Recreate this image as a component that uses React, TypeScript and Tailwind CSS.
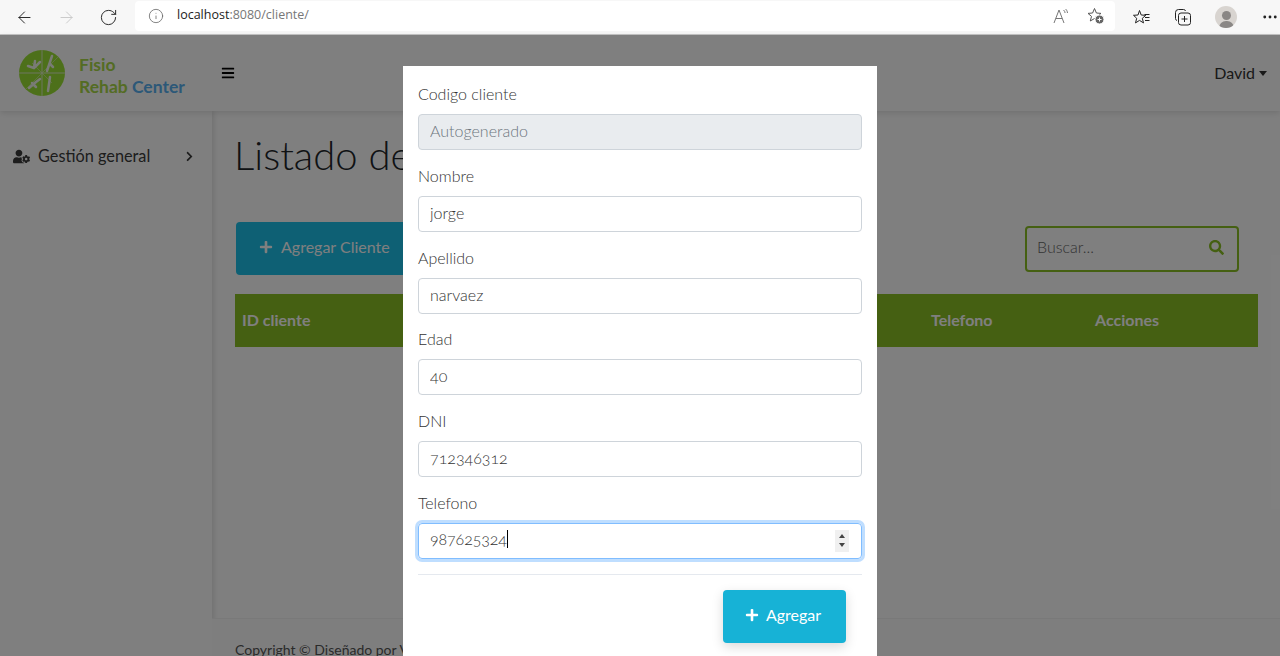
import React from 'react';
import { ArrowLeft, ArrowRight, RotateCw, Info, MoreHorizontal } from 'lucide-react';
import { FaBars, FaChevronRight, FaPlus, FaSearch, FaUserCog } from 'react-icons/fa';

const fields = [
  { label: 'Codigo cliente', value: 'Autogenerado', disabled: true },
  { label: 'Nombre', value: 'jorge' },
  { label: 'Apellido', value: 'narvaez' },
  { label: 'Edad', value: '40' },
  { label: 'DNI', value: '712346312' },
];

const BrowserBar = () => (
  <div className="h-[35px] shrink-0 bg-[#f7f7f7] border-b border-[#c4c4c4] flex items-center font-['Open_Sans',sans-serif]">
    <div className="w-[135px] flex items-center pl-[15px] gap-[23px] text-[#222]">
      <ArrowLeft size={19} strokeWidth={1.2} />
      <ArrowRight size={19} strokeWidth={1.2} className="text-[#c8c8c8]" />
      <RotateCw size={19} strokeWidth={1.2} />
    </div>
    <div className="w-[980px] h-[30px] mb-[3px] bg-white rounded-[4px] flex items-center pl-[13px] pr-[11px]">
      <Info size={16} strokeWidth={1.2} className="text-[#666]" />
      <span className="ml-[13px] text-[12.5px] text-[#777]">
        <span className="text-[#222]">localhost</span>:8080/cliente/
      </span>
      <div className="ml-auto flex items-center gap-[18px]">
        <svg width="16" height="16" viewBox="0 0 16 16" fill="none" stroke="#777" strokeWidth="1">
          <path d="M1 15 6 2l5 13M2.800 10.500h6.400" />
          <path d="M10.500 2c1 .8 1.400 1.600 1.600 3M12.500 1c1.200 1 1.800 2.200 2 4" />
        </svg>
        <svg width="17" height="17" viewBox="0 0 17 17" fill="none" stroke="#555" strokeWidth="1">
          <path d="M7.500 1.500 9.400 6l4.600.4-3.500 3 1.200 4.600-4.200-2.500-4.200 2.500 1.200-4.600L1 6.400 5.600 6z" />
          <circle cx="12.500" cy="12.500" r="4.500" fill="#666" stroke="#fff" />
          <path d="M12.500 10.500v4M10.500 12.500h4" stroke="#fff" />
        </svg>
      </div>
    </div>
    <div className="flex-1 flex items-center pl-[18px] text-[#222]">
      <svg width="18" height="17" viewBox="0 0 18 17" fill="none" stroke="#222" strokeWidth="1">
        <path d="M6.500 1.500 8.200 6l4.600.3-3.500 3 1.200 4.600-4-2.500-4 2.500 1.200-4.600L.5 6.300 5 6z" />
        <path d="M11.500 5.500h5M12 8.500h4.500M12 11.500h4.500" />
      </svg>
      <svg className="ml-[23px]" width="18" height="18" viewBox="0 0 18 18" fill="none" stroke="#222" strokeWidth="1">
        <path d="M3 12.500A2 2 0 0 1 1.500 10.500V4.500a3 3 0 0 1 3-3h5a2 2 0 0 1 2 1.500" />
        <rect x="4.500" y="5" width="12" height="12" rx="2.500" />
        <path d="M10.500 8v6M7.500 11h6" />
      </svg>
      <div className="ml-[23px] w-[22px] h-[22px] rounded-full bg-[#d8d4d0] flex flex-col items-center justify-end overflow-hidden">
        <div className="w-[9px] h-[9px] rounded-full bg-[#8a8785]" />
        <div className="w-[15px] h-[7px] mt-[1px] rounded-t-full bg-[#8a8785]" />
      </div>
      <MoreHorizontal size={18} strokeWidth={1.8} className="ml-[24px]" />
    </div>
  </div>
);

const Logo = () => (
  <svg width="46" height="46" viewBox="0 0 46 46" className="shrink-0">
    <circle cx="23" cy="23" r="23" fill="#9ae034" />
    <g stroke="#dcecc0" strokeWidth="1" fill="none">
      <path d="M23 0v46M0 23h46" />
      <path d="M23 23 39 7M23 23 7 39M23 23l10 10M23 23 13 13" opacity="0.6" />
    </g>
    <g stroke="#f2f6ea" strokeWidth="2.500" strokeLinecap="round" fill="none">
      <path d="M9 16l6 2 6-6M15 18l1-7" />
      <path d="M28 21l5-15M31 14l3 3" />
      <path d="M10 38l7-6 4-3M13 33l4 4" />
      <path d="M29 41l2-14" />
    </g>
  </svg>
);

const Page = () => (
  <div className="absolute inset-0 bg-white flex flex-col text-[#212529] font-['Lato',sans-serif]">
    <header className="relative z-10 h-[76px] shrink-0 bg-white shadow-[0_2px_6px_rgba(0,0,0,0.12)] flex items-center pl-[19px] pr-[13px]">
      <Logo />
      <div className="ml-[14px] w-[142px] mt-[6px] text-[17.5px] leading-[22px] font-bold text-[#a8d848]">
        <div>Fisio</div>
        <div>
          Rehab <span className="text-[#58b0f0]">Center</span>
        </div>
      </div>
      <FaBars size={14} className="text-black" />
      <div className="ml-auto flex items-center gap-[4px] text-[16px] text-[#333]">
        David
        <span className="border-x-[4.500px] border-x-transparent border-t-[5px] border-t-[#333]" />
      </div>
    </header>
    <div className="flex-1 flex min-h-0">
      <aside className="w-[212px] shrink-0 bg-white shadow-[1px_0_6px_rgba(0,0,0,0.15)] pt-[35px] pl-[13px] pr-[17px]">
        <div className="h-[20px] flex items-center text-[16.3px] text-[#3a3a3a]">
          <FaUserCog size={17} />
          <span className="ml-[8px]">Gestión general</span>
          <FaChevronRight size={11} className="ml-auto" />
        </div>
      </aside>
      <main className="flex-1 min-w-0 flex flex-col">
        <div className="flex-1 pl-[23px] pr-[22px]">
          <h1 className="mt-[19px] -ml-px text-[40px] leading-[50px] font-light">Listado de Clientes</h1>
          <div className="mt-[42px] flex items-center justify-between">
            <button className="w-[190px] h-[53px] pb-[3px] rounded-[4px] bg-[#1cc0e8] text-white text-[16px] flex items-center pl-[23px] gap-[8px] ml-px">
              <FaPlus size={14} />
              Agregar Cliente
            </button>
            <div className="w-[214px] h-[46px] pb-[3px] mr-[19px] rounded-[4px] border-2 border-[#8bc024] flex items-center pl-[10px] pr-[13px] text-[16px] text-[#666] font-light">
              Buscar...
              <FaSearch size={15} className="ml-auto text-[#8bc024]" />
            </div>
          </div>
          <div className="mt-[19px] h-[53px] pb-[2px] bg-[#8bc024] text-white text-[16px] font-bold grid grid-cols-[689px_164px_1fr] items-center pl-[7px]">
            <span>ID cliente</span>
            <span>Telefono</span>
            <span>Acciones</span>
          </div>
        </div>
        <footer className="h-[38px] shrink-0 bg-[#fdfdfd] border-t border-[#f2f2f2] pl-[23px] pt-[21px] text-[14px] leading-[20px] text-[#555]">
          Copyright © Diseñado por Vicente
        </footer>
      </main>
    </div>
  </div>
);

const ClienteModal = () => (
  <div className="absolute z-30 top-[31px] left-[403px] w-[474px] h-[620px] bg-white px-[15px] pt-[16px] text-[16px] text-[#495057] font-['Lato',sans-serif] oldstyle-nums">
    {fields.map((f) => (
      <div key={f.label} className="mb-[13.8px]">
        <label className="block leading-[24px] mb-[8px] h-[24px] font-light text-[#333]">{f.label}</label>
        <input
          readOnly
          value={f.value}
          className={`block w-full h-[36px] px-[11px] pb-[3px] rounded-[4px] border border-[#ced4da] outline-none font-light ${f.disabled ? 'bg-[#e9ecef] text-[#6c757d]' : 'bg-white text-[#333]'}`}
        />
      </div>
    ))}
    <label className="block leading-[24px] mb-[8px] h-[24px] font-light text-[#333]">Telefono</label>
    <div className="h-[36px] pl-[11px] pr-[12px] pb-[3px] rounded-[4px] border border-[#80bdff] shadow-[0_0_0_3px_rgba(0,123,255,0.25)] flex items-center font-light text-[#333]">
      <span className="tracking-[-0.1px]">987625324</span>
      <span className="w-px h-[18px] bg-black" />
      <span className="ml-auto mt-[3px] w-[14px] h-[22px] bg-[#f0f0f0] flex flex-col items-center justify-center gap-[5px]">
        <span className="border-x-[3.500px] border-x-transparent border-b-[4px] border-b-[#444]" />
        <span className="border-x-[3.500px] border-x-transparent border-t-[4px] border-t-[#444]" />
      </span>
    </div>
    <div className="mt-[15px] border-t border-[#e5e9ef] pt-[15px] flex justify-end pr-[16px]">
      <button className="w-[123px] h-[53px] pb-[3px] rounded-[4px] bg-[#17b2d6] text-white shadow-[0_4px_12px_rgba(0,0,0,0.15)] flex items-center justify-center gap-[7px] pr-[3px]">
        <FaPlus size={14} />
        Agregar
      </button>
    </div>
  </div>
);

export default function App() {
  return (
    <div className="w-[1280px] h-[656px] overflow-hidden flex flex-col">
      <BrowserBar />
      <div className="relative flex-1">
        <Page />
        <div className="absolute z-20 inset-0 bg-black/50" />
        <ClienteModal />
      </div>
    </div>
  );
}
